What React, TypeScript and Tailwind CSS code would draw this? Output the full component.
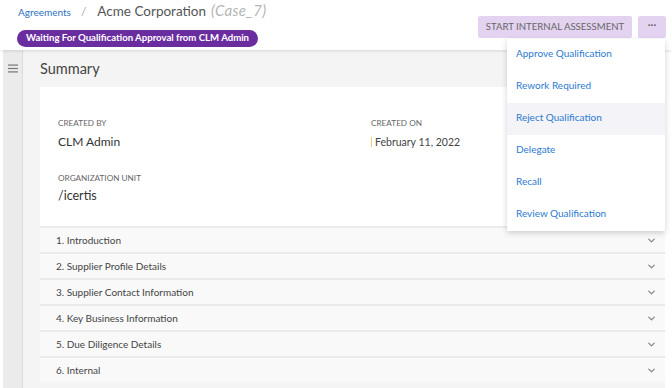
import React from "react";
import { ChevronDown } from "lucide-react";

const font = { fontFamily: "Lato, 'Open Sans', sans-serif" };

const sections = [
  "1. Introduction",
  "2. Supplier Profile Details",
  "3. Supplier Contact Information",
  "4. Key Business Information",
  "5. Due Diligence Details",
  "6. Internal",
];

const menu = [
  "Approve Qualification",
  "Rework Required",
  "Reject Qualification",
  "Delegate",
  "Recall",
  "Review Qualification",
];

export default function App() {
  return (
    <div
      className="relative w-[672px] h-[388px] overflow-hidden bg-white font-['Lato',sans-serif]"
      style={font}
    >
      {/* Header */}
      <div className="relative z-10 h-[50px] bg-white flex justify-between shadow-[0_1px_3px_rgba(0,0,0,0.12)]">
        <div className="pl-[17px]">
          <div className="flex items-baseline h-[24px] -mt-[1px]">
            <span className="ml-[1px] text-[10px] text-[#2a72c4]">Agreements</span>
            <span className="ml-[10px] text-[12px] text-[#aaa]">/</span>
            <span className="ml-[11px] text-[13.5px] text-[#555]">Acme Corporation</span>
            <span className="ml-[5px] text-[15px] italic text-[#b5b5b5] tracking-[0.3px]">(Case_7)</span>
          </div>
          <div className="mt-[2px] inline-flex h-[17px] items-center rounded-full bg-[#6a2d9f] px-[9px] text-[9.6px] font-bold text-white">
            Waiting For Qualification Approval from CLM Admin
          </div>
        </div>
        <div className="flex pt-[16px] pr-[6px] gap-[6px]">
          <div className="h-[22px] w-[154px] flex items-center justify-center rounded-[2px] bg-[#e3d3f1] text-[9.6px] text-[#666]">
            START INTERNAL ASSESSMENT
          </div>
          <div className="h-[22px] w-[28px] flex items-center justify-center rounded-[2px] bg-[#e3d3f1] text-[11px] text-[#555] pb-[3px]">
            ···
          </div>
        </div>
      </div>

      {/* Body */}
      <div className="flex h-[338px]">
        <div className="w-[3px] bg-white" />
        <div className="w-[20px] bg-[#ebebeb] border-r border-[#dcdcdc] flex justify-center pt-[14px]">
          <svg width="10" height="9" viewBox="0 0 10 9">
            <rect x="0" y="0.5" width="10" height="1.2" fill="#777" />
            <rect x="0" y="3.9" width="10" height="1.2" fill="#777" />
            <rect x="0" y="7.3" width="10" height="1.2" fill="#777" />
          </svg>
        </div>
        <div className="w-[642px] bg-[#f4f4f4] pl-[17px]">
          <div className="h-[37px] flex items-center text-[14.5px] text-[#444]">Summary</div>
          <div className="flex flex-col gap-[2px] bg-[#ebebeb]">
            <div className="h-[139px] bg-white pl-[18px] pt-[30px] grid grid-cols-[313px_1fr]">
              <div>
                <div className="text-[8.2px] leading-[12px] text-[#666] uppercase">Created By</div>
                <div className="mt-[4px] text-[12px] leading-[18px] text-[#333]">CLM Admin</div>
                <div className="mt-[21px] text-[8.2px] leading-[12px] text-[#666] uppercase">Organization Unit</div>
                <div className="mt-[3px] text-[12.5px] leading-[18px] text-[#333]">/icertis</div>
              </div>
              <div>
                <div className="text-[8.2px] leading-[12px] text-[#666] uppercase">Created On</div>
                <div className="mt-[4px] flex items-center text-[10.5px] leading-[18px] text-[#444]">
                  <span className="mr-[3px] inline-block h-[10px] w-[1px] bg-[#f5c97a]" />
                  February 11, 2022
                </div>
              </div>
            </div>
            {sections.map((s) => (
              <div
                key={s}
                className="h-[24px] bg-[#f9f9f9] flex items-center justify-between pl-[16px] pr-[8px] text-[10px] text-[#444]"
              >
                <span>{s}</span>
                <ChevronDown size={11} strokeWidth={3} color="#8a8a8a" />
              </div>
            ))}
          </div>
        </div>
        <div className="flex-1 bg-white" />
      </div>

      {/* Dropdown */}
      <div className="absolute left-[507px] top-[39px] z-20 w-[158px] bg-white shadow-[0_2px_6px_rgba(0,0,0,0.18)]">
        {menu.map((m) => (
          <div
            key={m}
            className={`h-[32px] flex items-center pl-[9px] pb-[3px] text-[10px] text-[#2b7bd0] ${
              m === "Reject Qualification" ? "bg-[#f3f3f8]" : ""
            }`}
          >
            {m}
          </div>
        ))}
      </div>
    </div>
  );
}
